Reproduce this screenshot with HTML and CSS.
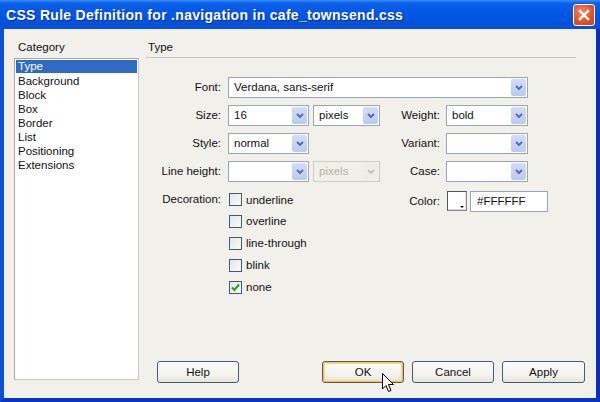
FILE: index.html
```html
<!DOCTYPE html>
<html>
<head>
<meta charset="utf-8">
<link rel="stylesheet" href="styles.css">
</head>
<body>
<div class="window">
  <div class="titlebar">
    <span class="title">CSS Rule Definition for .navigation in cafe_townsend.css</span>
    <div class="close"><svg width="12" height="12" viewBox="0 0 12 12"><path d="M2 2 L10 10 M10 2 L2 10" stroke="#fff" stroke-width="2.4" stroke-linecap="square"/></svg></div>
  </div>
  <div class="content">
    <div class="cat">
      <div class="hdr">Category</div>
      <ul class="list">
        <li class="sel-item">Type</li>
        <li>Background</li>
        <li>Block</li>
        <li>Box</li>
        <li>Border</li>
        <li>List</li>
        <li>Positioning</li>
        <li>Extensions</li>
      </ul>
    </div>
    <div class="right">
      <div class="hdr phdr">Type</div>
      <div class="form">
        <div class="lbl">Font:</div>
        <div class="span4"><div class="sel w300"><span class="val">Verdana, sans-serif</span><span class="arr"><svg width="8" height="6" viewBox="0 0 8 6"><path d="M1 1 L4 4 L7 1" fill="none" stroke="#4d6aa8" stroke-width="1.8"/></svg></span></div></div>

        <div class="lbl">Size:</div>
        <div><div class="sel w81"><span class="val">16</span><span class="arr"><svg width="8" height="6" viewBox="0 0 8 6"><path d="M1 1 L4 4 L7 1" fill="none" stroke="#4d6aa8" stroke-width="1.8"/></svg></span></div></div>
        <div><div class="sel w67"><span class="val">pixels</span><span class="arr"><svg width="8" height="6" viewBox="0 0 8 6"><path d="M1 1 L4 4 L7 1" fill="none" stroke="#4d6aa8" stroke-width="1.8"/></svg></span></div></div>
        <div class="lbl rl">Weight:</div>
        <div><div class="sel w82"><span class="val">bold</span><span class="arr"><svg width="8" height="6" viewBox="0 0 8 6"><path d="M1 1 L4 4 L7 1" fill="none" stroke="#4d6aa8" stroke-width="1.8"/></svg></span></div></div>

        <div class="lbl">Style:</div>
        <div><div class="sel w81"><span class="val">normal</span><span class="arr"><svg width="8" height="6" viewBox="0 0 8 6"><path d="M1 1 L4 4 L7 1" fill="none" stroke="#4d6aa8" stroke-width="1.8"/></svg></span></div></div>
        <div></div>
        <div class="lbl rl">Variant:</div>
        <div><div class="sel w82"><span class="val"></span><span class="arr"><svg width="8" height="6" viewBox="0 0 8 6"><path d="M1 1 L4 4 L7 1" fill="none" stroke="#4d6aa8" stroke-width="1.8"/></svg></span></div></div>

        <div class="lbl">Line height:</div>
        <div><div class="sel w81"><span class="val"></span><span class="arr"><svg width="8" height="6" viewBox="0 0 8 6"><path d="M1 1 L4 4 L7 1" fill="none" stroke="#4d6aa8" stroke-width="1.8"/></svg></span></div></div>
        <div><div class="sel w67 dis"><span class="val">pixels</span><span class="arr"><svg width="8" height="6" viewBox="0 0 8 6"><path d="M1 1 L4 4 L7 1" fill="none" stroke="#c4c2b8" stroke-width="1.8"/></svg></span></div></div>
        <div class="lbl rl">Case:</div>
        <div><div class="sel w82"><span class="val"></span><span class="arr"><svg width="8" height="6" viewBox="0 0 8 6"><path d="M1 1 L4 4 L7 1" fill="none" stroke="#4d6aa8" stroke-width="1.8"/></svg></span></div></div>

        <div class="lbl dlbl">Decoration:</div>
        <div class="span2 checks">
          <label class="chk"><span class="box"></span>underline</label>
          <label class="chk"><span class="box"></span>overline</label>
          <label class="chk"><span class="box"></span>line-through</label>
          <label class="chk"><span class="box"></span>blink</label>
          <label class="chk"><span class="box"><svg width="11" height="11" viewBox="0 0 11 11"><path d="M2 5.5 L4.5 8 L9 2.5" fill="none" stroke="#21a121" stroke-width="2"/></svg></span>none</label>
        </div>
        <div class="lbl rl clbl">Color:</div>
        <div class="colorcell">
          <span class="swatch"><span class="tri"></span></span>
          <span class="cinput">#FFFFFF</span>
        </div>
      </div>
      <div class="buttons">
        <div class="btn">Help</div>
        <div class="grp">
          <div class="btn focus">OK</div>
          <div class="btn">Cancel</div>
          <div class="btn w83">Apply</div>
        </div>
      </div>
    </div>
  </div>
  <svg class="cursor" width="13" height="21" viewBox="0 0 13 21"><path d="M0.5 0.5 L0.5 16 L4 12.5 L6.5 18.5 L9 17.5 L6.5 11.5 L11.5 11.5 Z" fill="#fff" stroke="#000" stroke-width="1"/></svg>
</div>
</body>
</html>
```

FILE: styles.css
```css
html, body {
  margin: 0;
  padding: 0;
}
body {
  font-family: "Liberation Sans", Arial, sans-serif;
  font-size: 11px;
  color: #111;
}
.window {
  position: relative;
  width: 600px;
  height: 402px;
  box-sizing: border-box;
  background: #f1f0eb;
  border-left: 4px solid #0a4fd8;
  border-right: 4px solid #0b2fb0;
  border-bottom: 4px solid #0a35c0;
  display: flex;
  flex-direction: column;
}
.titlebar {
  margin: 0 -4px;
  height: 29px;
  background: linear-gradient(#3d8ef8 0, #0a62ea 3px, #0659e6 10px, #0054df 20px, #0a4fd4 29px);
  display: flex;
  align-items: center;
  justify-content: space-between;
  padding: 0 5px 0 6px;
  flex: none;
}
.title {
  color: #fff;
  font-weight: bold;
  font-size: 14px;
  letter-spacing: 0.3px;
  text-shadow: 1px 1px 0 #0a2f8a;
}
.close {
  width: 20px;
  height: 20px;
  border: 1px solid #fff;
  border-radius: 3px;
  background: radial-gradient(circle at 40% 35%, #f08a6a 0, #e0552e 55%, #c83d1a 100%);
  display: flex;
  align-items: center;
  justify-content: center;
}
.content {
  flex: 1;
  display: flex;
  min-height: 0;
}
.cat {
  padding: 10px 0 0 10px;
  width: 125px;
}
.hdr {
  height: 19px;
  line-height: 16px;
  padding-left: 4px;
  font-size: 11.5px;
}
.list {
  list-style: none;
  margin: 0;
  padding: 1px 0 0;
  height: 322px;
  box-sizing: border-box;
  border: 1px solid #a7a6aa;
  border-right-color: #c8c7cc;
  border-bottom-color: #c8c7cc;
  background: #fff;
}
.list li {
  height: 14px;
  line-height: 14px;
  padding-left: 3px;
  font-size: 11.5px;
}
.list li.sel-item {
  background: #316ac5;
  color: #fff;
  margin: 0 1px;
  padding-left: 2px;
  height: 13px;
  line-height: 13px;
  margin-bottom: 1px;
}
.right {
  flex: 1;
  margin-left: 7px;
  padding-top: 10px;
  display: flex;
  flex-direction: column;
}
.phdr {
  margin-right: 20px;
  height: 18px;
  padding-left: 2px;
  border-bottom: 1px solid #c9c8c0;
}
.form {
  display: grid;
  grid-template-columns: 82px 85px 67px 66px 102px;
  grid-template-rows: 21px 21px 21px 21px auto;
  row-gap: 7px;
  margin-top: 19px;
}
.span4 { grid-column: span 4; }
.span2 { grid-column: span 2; }
.lbl {
  text-align: right;
  padding-right: 7px;
  line-height: 21px;
  font-size: 11.5px;
}
.lbl.rl { padding-right: 6px; }
.sel {
  height: 21px;
  box-sizing: border-box;
  border: 1px solid #9aa5b5;
  background: #fff;
  display: flex;
  align-items: stretch;
}
.sel .val {
  flex: 1;
  padding-left: 5px;
  line-height: 19px;
  font-size: 11.5px;
  white-space: nowrap;
  overflow: hidden;
}
.sel .arr {
  width: 15px;
  margin: 1px;
  border-radius: 2px;
  background: linear-gradient(#d3ddf8, #b9caf2);
  display: flex;
  align-items: center;
  justify-content: center;
}
.sel.dis {
  background: #f0efe8;
  border-color: #cfcec6;
  color: #b5b3a8;
}
.sel.dis .arr {
  background: #eeede6;
}
.w300 { width: 300px; }
.w81 { width: 81px; }
.w67 { width: 67px; }
.w82 { width: 82px; }
.checks {
  display: flex;
  flex-direction: column;
}
.chk {
  display: flex;
  align-items: center;
  flex: none;
  height: 22px;
  font-size: 11.5px;
}
.chk:first-child { height: 21px; }
.box {
  width: 13px;
  height: 13px;
  box-sizing: border-box;
  border: 1px solid #3c5a7e;
  background: linear-gradient(135deg, #e6e6e0, #fbfbf9);
  margin: 0 4px 0 1px;
  display: flex;
  align-items: center;
  justify-content: center;
}
.clbl { line-height: 24px; }
.colorcell {
  display: flex;
  align-items: center;
  align-self: start;
  height: 24px;
  gap: 3px;
}
.swatch {
  position: relative;
  width: 20px;
  height: 20px;
  box-sizing: border-box;
  margin-left: 1px;
  border: 1px solid #555;
  border-right-color: #888;
  border-bottom-color: #888;
  background: #fff;
  box-shadow: inset -1px -1px 0 #ddd;
}
.tri {
  position: absolute;
  right: 2px;
  bottom: 2px;
  width: 0;
  height: 0;
  border-left: 2px solid transparent;
  border-right: 2px solid transparent;
  border-top: 2px solid #000;
}
.cinput {
  width: 78px;
  height: 21px;
  box-sizing: border-box;
  border: 1px solid #9aa5b5;
  background: #fff;
  padding-left: 6px;
  line-height: 19px;
  font-size: 11.5px;
}
.buttons {
  margin-top: auto;
  margin-bottom: 15px;
  padding: 0 11px;
  display: flex;
  justify-content: space-between;
}
.grp {
  display: flex;
  gap: 8px;
}
.btn {
  width: 82px;
  height: 22px;
  box-sizing: border-box;
  border: 1px solid #4a5a72;
  border-radius: 3px;
  background: linear-gradient(#fdfdfb, #f2f1ec 70%, #e3e2da);
  text-align: center;
  line-height: 20px;
  font-size: 11.5px;
}
.btn.w83 { width: 83px; }
.btn.focus {
  box-shadow: inset 0 0 0 1px #f7c350, inset 0 0 0 2px #fbd98a;
}
.cursor {
  position: absolute;
  left: 378px;
  top: 373px;
}
```
